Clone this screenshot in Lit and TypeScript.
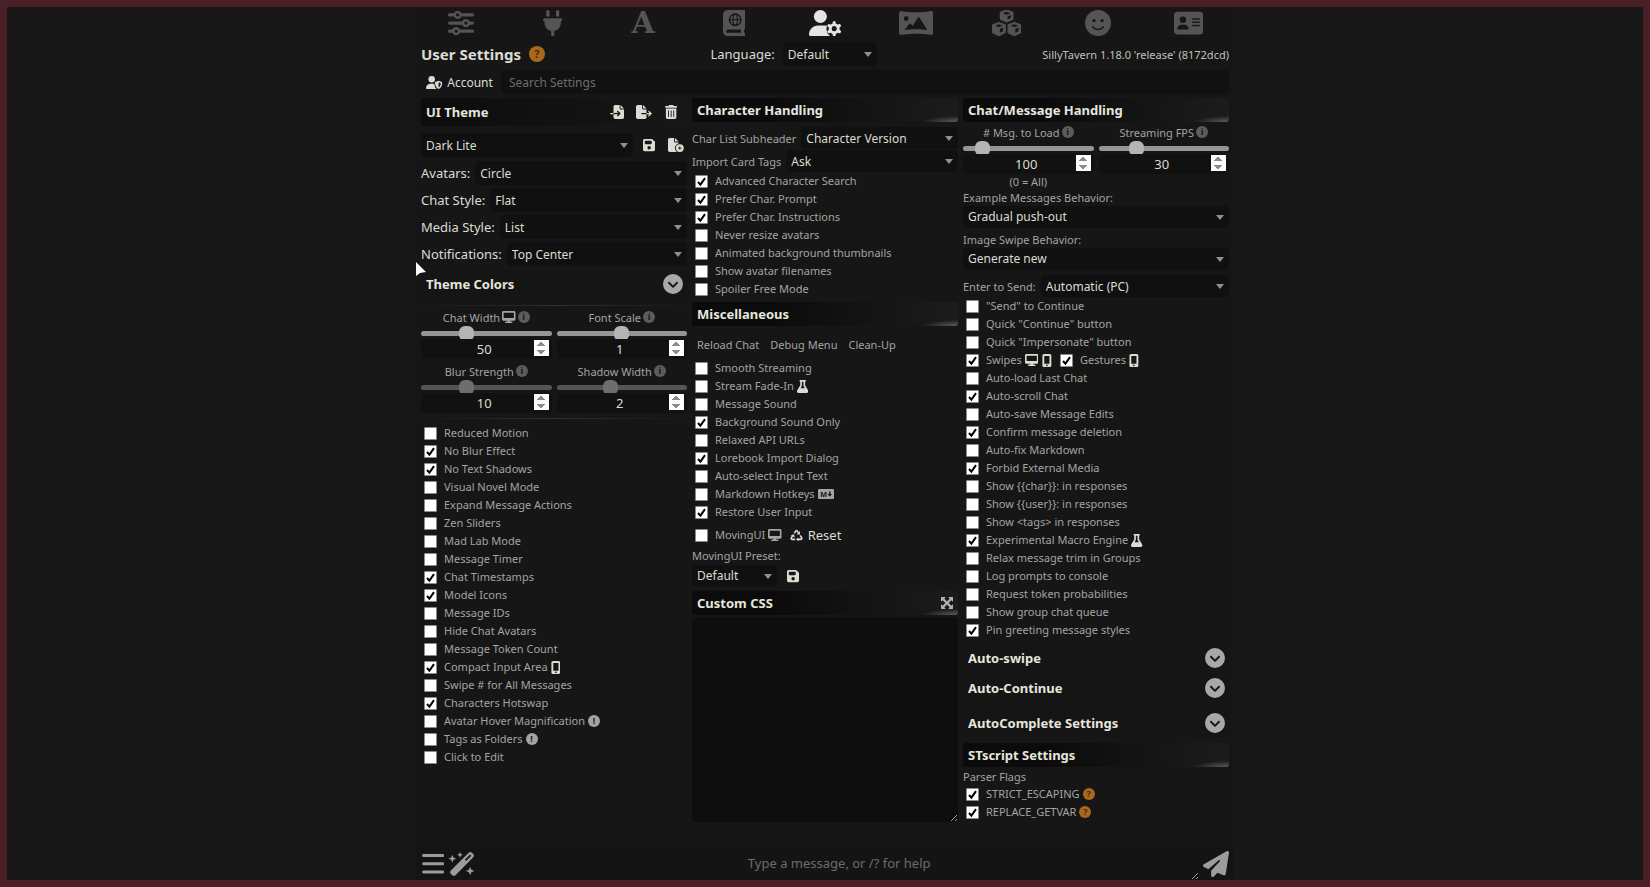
import { LitElement, html, svg, css, nothing, type TemplateResult } from "lit";
import { customElement, property } from "lit/decorators.js";
import { classMap } from "lit/directives/class-map.js";

type Glyph = { box: string; art: TemplateResult };
const path = (box: string, d: string): Glyph => ({ box, art: svg`<path fill-rule="evenodd" d=${d}></path>` });

const GLYPHS: Record<string, Glyph> = {
  sliders: path("0 0 512 512", "M0 416c0 17.7 14.3 32 32 32l54.7 0c12.3 28.3 40.5 48 73.3 48s61-19.7 73.3-48L480 448c17.7 0 32-14.3 32-32s-14.3-32-32-32l-246.7 0c-12.3-28.3-40.5-48-73.3-48s-61 19.7-73.3 48L32 384c-17.7 0-32 14.3-32 32zm128 0a32 32 0 1 1 64 0 32 32 0 1 1 -64 0zM320 256a32 32 0 1 1 64 0 32 32 0 1 1 -64 0zm32-80c-32.8 0-61 19.7-73.3 48L32 224c-17.7 0-32 14.3-32 32s14.3 32 32 32l246.7 0c12.3 28.3 40.5 48 73.3 48s61-19.7 73.3-48l54.7 0c17.7 0 32-14.3 32-32s-14.3-32-32-32l-54.7 0c-12.3-28.3-40.5-48-73.3-48zM192 128a32 32 0 1 1 0-64 32 32 0 1 1 0 64zm73.3-64C253 35.7 224.8 16 192 16s-61 19.7-73.3 48L32 64C14.3 64 0 78.3 0 96s14.3 32 32 32l86.7 0c12.3 28.3 40.5 48 73.3 48s61-19.7 73.3-48L480 128c17.7 0 32-14.3 32-32s-14.3-32-32-32L265.3 64z"),
  plug: path("0 0 384 512", "M96 0C78.3 0 64 14.3 64 32l0 96 64 0 0-96c0-17.7-14.3-32-32-32zM288 0c-17.7 0-32 14.3-32 32l0 96 64 0 0-96c0-17.7-14.3-32-32-32zM32 160c-17.7 0-32 14.3-32 32s14.3 32 32 32l0 32c0 77.4 55 142 128 156.8l0 67.2c0 17.7 14.3 32 32 32s32-14.3 32-32l0-67.2C297 398 352 333.4 352 256l0-32c17.7 0 32-14.3 32-32s-14.3-32-32-32L32 160z"),
  atlas: {
    box: "0 0 448 512",
    art: svg`<path fill-rule="evenodd" d="M96 0C43 0 0 43 0 96v320c0 53 43 96 96 96h320c18 0 32-14 32-32s-14-32-32-32v-64c18 0 32-14 32-32V32c0-18-14-32-32-32H96zm0 384h256v64H96c-18 0-32-14-32-32s14-32 32-32zM240 64a128 128 0 1 1 0 256 128 128 0 1 1 0-256z"></path>
      <circle cx="240" cy="192" r="100"></circle>
      <g fill="none" stroke="#171717" stroke-width="22"><ellipse cx="240" cy="192" rx="44" ry="104"></ellipse><path d="M136 192h208"></path></g>`,
  },
  userGear: {
    box: "0 0 640 512",
    art: svg`<circle cx="224" cy="128" r="128"></circle>
      <path d="M178 304C80 304 0 384 0 482c0 17 13 30 30 30h388c-55-35-78-95-62-160 5-18 10-30 18-42-30-6-70-6-104-6z"></path>
      <circle cx="496" cy="368" r="152" fill="#171717"></circle>
      <circle cx="496" cy="368" r="78" fill="none" stroke="currentColor" stroke-width="60"></circle>
      <g stroke="currentColor" stroke-width="62" stroke-linecap="round"><path d="M496 262v-12M496 474v12M404 315l-10-6M588 421l10 6M588 315l10-6M404 421l-10 6"></path></g>
      <circle cx="496" cy="368" r="48" fill="#171717"></circle>`,
  },
  panorama: path("0 0 640 448", "M46 0C20 0 0 20 0 46v356c0 26 20 46 46 46 5 0 10-1 15-3 14-4 117-20 259-20s245 16 259 20c5 2 10 3 15 3 26 0 46-20 46-46V46c0-26-20-46-46-46-5 0-10 1-15 3-14 4-117 20-259 20S75 7 61 3c-5-2-10-3-15-3zM134 96a46 46 0 1 1 0 92 46 46 0 1 1 0-92zM368 118c9 0 16 4 20 11l142 228c-60-8-134-14-210-14-80 0-156 5-217 14l86-108c5-6 12-9 19-9s14 3 19 9l27 33 94-153c4-7 11-11 20-11z"),
  cubes: {
    box: "0 0 576 512",
    art: svg`<path d="M288 0l122 46v132l-122 56-122-56V46zM136 246l122 48v150l-122 60L14 444V294zM440 246l122 48v150l-122 60-122-60V294z" stroke="currentColor" stroke-width="26" stroke-linejoin="round"></path>
      <path d="M288 32l76 30-76 32-76-32zM136 282l72 28-72 30-72-30zM440 282l72 28-72 30-72-30zM306 126l66-28v58l-66 32zM154 374l66-28v70l-66 34zM458 374l66-28v70l-66 34z" fill="#171717"></path>`,
  },
  smile: path("0 0 512 512", "M256 512A256 256 0 1 0 256 0a256 256 0 1 0 0 512zM164.1 325.5C182 346.2 212.6 368 256 368s74-21.8 91.9-42.5c5.8-6.7 15.9-7.4 22.6-1.6s7.4 15.9 1.6 22.6C349.8 372.1 311.1 400 256 400s-93.8-27.9-116.1-53.5c-5.8-6.7-5.1-16.8 1.6-22.6s16.8-5.1 22.6 1.6zM144.4 208a32 32 0 1 1 64 0 32 32 0 1 1 -64 0zm192-32a32 32 0 1 1 0 64 32 32 0 1 1 0-64z"),
  card: path("0 0 576 512", "M64 32C28.7 32 0 60.7 0 96L0 416c0 35.3 28.7 64 64 64l448 0c35.3 0 64-28.7 64-64l0-320c0-35.3-28.7-64-64-64L64 32zm80 256l64 0c44.2 0 80 35.8 80 80c0 8.8-7.2 16-16 16L80 384c-8.8 0-16-7.2-16-16c0-44.2 35.8-80 80-80zm-32-96a64 64 0 1 1 128 0 64 64 0 1 1 -128 0zm256-32l128 0c8.8 0 16 7.2 16 16s-7.2 16-16 16l-128 0c-8.8 0-16-7.2-16-16s7.2-16 16-16zm0 64l128 0c8.8 0 16 7.2 16 16s-7.2 16-16 16l-128 0c-8.8 0-16-7.2-16-16s7.2-16 16-16zm0 64l128 0c8.8 0 16 7.2 16 16s-7.2 16-16 16l-128 0c-8.8 0-16-7.2-16-16s7.2-16 16-16z"),
  userShield: {
    box: "0 0 640 512",
    art: svg`<circle cx="224" cy="128" r="128"></circle>
      <path d="M178 304C80 304 0 384 0 482c0 17 13 30 30 30h388c-60-50-84-110-84-190-20-14-60-18-84-18z"></path>
      <path fill-rule="evenodd" d="M496 190l130 50c8 3 14 10 14 20 0 80-30 200-144 252-114-52-144-172-144-252 0-10 6-17 14-20zM496 250v200c60-35 84-100 86-168z"></path>`,
  },
  fileImport: path("0 0 512 512", "M128 64c0-35.3 28.7-64 64-64L352 0l0 128c0 17.7 14.3 32 32 32l128 0 0 288c0 35.3-28.7 64-64 64l-256 0c-35.3 0-64-28.7-64-64l0-112 174.1 0-39 39c-9.4 9.4-9.4 24.6 0 33.9s24.6 9.4 33.9 0l80-80c9.4-9.4 9.4-24.6 0-33.9l-80-80c-9.4-9.4-24.6-9.4-33.9 0s-9.4 24.6 0 33.9l39 39L128 288l0-224zm0 224l0 48L24 336c-13.3 0-24-10.7-24-24s10.7-24 24-24l104 0zM512 128l-128 0L384 0 512 128z"),
  fileExport: path("0 0 576 512", "M0 64C0 28.7 28.7 0 64 0L224 0l0 128c0 17.7 14.3 32 32 32l128 0 0 128-168 0c-13.3 0-24 10.7-24 24s10.7 24 24 24l168 0 0 112c0 35.3-28.7 64-64 64L64 512c-35.3 0-64-28.7-64-64L0 64zM384 336l0-48 110.1 0-39-39c-9.4-9.4-9.4-24.6 0-33.9s24.6-9.4 33.9 0l80 80c9.4 9.4 9.4 24.6 0 33.9l-80 80c-9.4 9.4-24.6 9.4-33.9 0s-9.4-24.6 0-33.9l39-39L384 336zm0-208l-128 0L256 0 384 128z"),
  trash: path("0 0 448 512", "M135.2 17.7C140.6 6.8 151.7 0 163.8 0L284.2 0c12.1 0 23.2 6.8 28.6 17.7L320 32l96 0c17.7 0 32 14.3 32 32s-14.3 32-32 32L32 96C14.3 96 0 81.7 0 64S14.3 32 32 32l96 0 7.2-14.3zM32 128l384 0 0 320c0 35.3-28.7 64-64 64L96 512c-35.3 0-64-28.7-64-64l0-320zm96 64c-8.8 0-16 7.2-16 16l0 224c0 8.8 7.2 16 16 16s16-7.2 16-16l0-224c0-8.8-7.2-16-16-16zm96 0c-8.8 0-16 7.2-16 16l0 224c0 8.8 7.2 16 16 16s16-7.2 16-16l0-224c0-8.8-7.2-16-16-16zm96 0c-8.8 0-16 7.2-16 16l0 224c0 8.8 7.2 16 16 16s16-7.2 16-16l0-224c0-8.8-7.2-16-16-16z"),
  floppy: path("0 0 448 512", "M64 32C28.7 32 0 60.7 0 96L0 416c0 35.3 28.7 64 64 64l320 0c35.3 0 64-28.7 64-64l0-242.7c0-17-6.7-33.3-18.7-45.3L352 50.7C340 38.7 323.7 32 306.7 32L64 32zm0 96c0-17.7 14.3-32 32-32l192 0c17.7 0 32 14.3 32 32l0 64c0 17.7-14.3 32-32 32L96 224c-17.7 0-32-14.3-32-32l0-64zM224 288a64 64 0 1 1 0 128 64 64 0 1 1 0-128z"),
  filePlus: {
    box: "0 0 576 512",
    art: svg`<path d="M64 0h160v128c0 18 14 32 32 32h128v38c-80 30-128 90-128 170 0 60 25 110 70 144H64c-35 0-64-29-64-64V64C0 29 29 0 64 0zM256 0l128 128H256z"></path>
      <path fill-rule="evenodd" d="M432 224a144 144 0 1 1 0 288 144 144 0 1 1 0-288zM416 304v48h-48v32h48v48h32v-48h48v-32h-48v-48z"></path>`,
  },
  desktop: path("0 0 576 512", "M64 0C28.7 0 0 28.7 0 64L0 352c0 35.3 28.7 64 64 64l176 0-10.7 32L160 448c-17.7 0-32 14.3-32 32s14.3 32 32 32l256 0c17.7 0 32-14.3 32-32s-14.3-32-32-32l-69.3 0L336 416l176 0c35.3 0 64-28.7 64-64l0-288c0-35.3-28.7-64-64-64L64 0zM506 70l0 230L70 300 70 70l436 0z"),
  mobile: path("0 0 384 512", "M16 64C16 28.7 44.7 0 80 0L304 0c35.3 0 64 28.7 64 64l0 384c0 35.3-28.7 64-64 64L80 512c-35.3 0-64-28.7-64-64L16 64zM224 448a32 32 0 1 0 -64 0 32 32 0 1 0 64 0zM294 74L90 74l0 310 204 0 0-310z"),
  flask: path("0 0 448 512", "M288 0L160 0 128 0C110.3 0 96 14.3 96 32s14.3 32 32 32l0 132.8c0 11.8-3.3 23.5-9.5 33.5L10.3 406.2C3.6 417.2 0 429.7 0 442.6C0 480.9 31.1 512 69.4 512l309.2 0c38.3 0 69.4-31.1 69.4-69.4c0-12.8-3.6-25.4-10.3-36.4L329.5 230.4c-6.2-10.1-9.5-21.7-9.5-33.5L320 64c17.7 0 32-14.3 32-32s-14.3-32-32-32L288 0zM192 196.8L192 64l64 0 0 132.8c0 23.7 6.6 46.9 19 67.1L309.5 320l-171 0L173 263.9c12.4-20.2 19-43.4 19-67.1z"),
  markdown: {
    box: "0 0 640 400",
    art: svg`<rect width="640" height="400" rx="48"></rect><text x="90" y="306" font-family="Noto Sans" font-weight="700" font-size="290" fill="#171717">M</text><path d="M440 96h60v100h60L470 310 380 196h60z" fill="#171717"></path>`,
  },
  recycle: {
    box: "0 0 512 512",
    art: svg`<g fill="none" stroke="currentColor" stroke-width="62" stroke-linejoin="round"><path d="M172 170l58-98c12-20 40-20 52 0l48 82"></path><path d="M402 252l62 106c12 22-4 50-30 50H300"></path><path d="M204 408H78c-26 0-42-28-30-50l54-92"></path></g>
      <path d="M392 78v136H256zM332 330v156l-92-78zM30 246l128-42 32 126z"></path>`,
  },
  expand: {
    box: "0 0 512 512",
    art: svg`<path d="M20 0h150c16 0 24 18 12 30l-42 42 116 116L372 72l-42-42c-12-12-4-30 12-30h150c12 0 20 8 20 20v150c0 16-18 24-30 12l-42-42-116 116 116 116 42-42c12-12 30-4 30 12v150c0 12-8 20-20 20H342c-16 0-24-18-12-30l42-42-116-116-116 116 42 42c12 12 4 30-12 30H20c-12 0-20-8-20-20V342c0-16 18-24 30-12l42 42 116-116L72 140l-42 42c-12 12-30 4-30-12V20C0 8 8 0 20 0z"></path>`,
  },
  chevron: path("0 0 512 512", "M256 0a256 256 0 1 0 0 512A256 256 0 1 0 256 0zM135 241c-9.4-9.4-9.4-24.6 0-33.9s24.6-9.4 33.9 0l87 87 87-87c9.4-9.4 24.6-9.4 33.9 0s9.4 24.6 0 33.9L273 345c-9.4 9.4-24.6 9.4-33.9 0L135 241z"),
  bars: path("0 0 448 400", "M32 0h384a30 30 0 0 1 0 60H32a30 30 0 0 1 0-60zM32 165h384a30 30 0 0 1 0 60H32a30 30 0 0 1 0-60zM32 330h384a30 30 0 0 1 0 60H32a30 30 0 0 1 0-60z"),
  wand: {
    box: "0 0 576 512",
    art: svg`<path fill-rule="evenodd" d="M440 16c20-20 50-20 70 0l28 28c20 20 20 50 0 70L160 494c-20 20-52 20-72 0l-28-28c-20-20-20-52 0-72zM472 54l-112 112 26 28L498 80z"></path>
      <path d="M92 56l24 62 62 24-62 24-24 62-24-62-62-24 62-24zM256 0l18 42 42 18-42 18-18 42-18-42-42-18 42-18zM472 312l26 66 66 26-66 26-26 66-26-66-66-26 66-26z"></path>`,
  },
  plane: path("0 0 512 512", "M498.1 5.6c10.1 7 15.4 19.1 13.5 31.2l-64 416c-1.5 9.7-7.4 18.2-16 23s-18.9 5.4-28 1.6L284 427.7l-68.5 74.1c-8.9 9.7-22.9 12.9-35.2 8.1S160 493.2 160 480l0-83.6c0-4 1.5-7.8 4.2-10.8L331.8 202.8c5.8-6.3 5.6-16-.4-22s-15.7-6.4-22-.7L106 360.8 17.7 316.6C7.1 311.3 .3 300.7 0 288.9s5.9-22.8 16.1-28.7l448-256c10.7-6.1 23.9-5.5 34 1.4z"),
};

const icon = (name: string, size = "s13") =>
  html`<svg class="icon ${size}" viewBox=${GLYPHS[name].box} fill="currentColor" aria-hidden="true">${GLYPHS[name].art}</svg>`;

const mark = (kind: "info" | "note" | "help") =>
  html`<span class="mark ${kind}" aria-hidden="true">${kind === "info" ? "i" : kind === "note" ? "!" : "?"}</span>`;

const shared = css`
  :host { display: block; color: #dcdcd2; font-family: "Noto Sans", sans-serif; }
  *, *::before, *::after { box-sizing: border-box; }
  button, input, select, textarea { font: inherit; color: inherit; margin: 0; }
  button { display: inline-flex; align-items: center; justify-content: center; gap: 5px; padding: 0; border: 0; background: none; }
  .icon { display: block; flex: none; width: auto; }
  .s10 { height: 10px; }
  .s12 { height: 12px; }
  .s13 { height: 13px; }
  .s14 { height: 14px; }
  .s20 { height: 20px; }
  .s24 { height: 24px; }
  .s26 { height: 26px; }
  .mark { display: inline-flex; flex: none; align-items: center; justify-content: center; width: 12px; height: 12px; border-radius: 50%; font-size: 9px; line-height: 12px; font-weight: 700; color: #171717; }
  .info { background: #5c5c5c; }
  .note { background: #a3a3a3; }
  .help { background: #a8691c; color: #4a2c0a; }
  .select { flex: 1; min-width: 0; width: 100%; height: 24px; padding: 0 20px 0 5px; border: 0; border-radius: 4px; appearance: none; font-size: 12px; background: #101010 url("data:image/svg+xml,%3Csvg xmlns='http://www.w3.org/2000/svg' width='8' height='5'%3E%3Cpath d='M0 0h8L4 5z' fill='%23909090'/%3E%3C/svg%3E") no-repeat right 5px center; }
`;

/** A tick box with its caption; extra icons are slotted after the text. */
@customElement("tick-row")
class TickRow extends LitElement {
  @property() label = "";
  @property({ type: Boolean }) on = false;
  static styles = [shared, css`
    .tick { display: flex; align-items: center; gap: 7px; height: 18px; padding-left: 3px; font-size: 11px; line-height: 18px; color: #a4a4a0; white-space: nowrap; }
    .box { appearance: none; flex: none; width: 13px; height: 13px; border: 1px solid #8a8a8a; border-radius: 1px; background: #fff center no-repeat; }
    .box:checked { background-image: url("data:image/svg+xml,%3Csvg xmlns='http://www.w3.org/2000/svg' width='11' height='11'%3E%3Cpath d='M2 6l2.400 2.600L9 2.200' fill='none' stroke='%23000' stroke-width='2'/%3E%3C/svg%3E"); }
    .text { display: flex; align-items: center; gap: 3px; }
  `];
  render() {
    return html`<label class="tick"><input class="box" type="checkbox" .checked=${this.on}><span class="text">${this.label}<slot></slot></span></label>`;
  }
}

/** A slider with a caption above it and a number box below it. */
@customElement("range-field")
class RangeField extends LitElement {
  @property() label = "";
  @property({ type: Number }) min = 0;
  @property({ type: Number }) max = 100;
  @property({ type: Number }) step = 1;
  @property({ type: Number }) value = 0;
  @property({ type: Boolean }) screen = false;
  @property({ type: Boolean }) dim = false;
  @property() hint = "";
  static styles = [shared, css`
    .field { display: flex; flex-direction: column; align-items: stretch; }
    .caption { display: flex; align-items: center; justify-content: center; gap: 2px; height: 18px; padding-bottom: 2px; font-size: 11px; color: #a4a4a0; }
    .slider { appearance: none; display: block; width: 100%; height: 12px; background: none; }
    .slider::-webkit-slider-runnable-track { height: 5px; border-radius: 3px; background: #969696; }
    .slider::-webkit-slider-thumb { appearance: none; width: 15px; height: 15px; margin-top: -5px; border-radius: 6px; background: #b4b4b4; }
    .dim .slider::-webkit-slider-runnable-track { background: #555; }
    .dim .slider::-webkit-slider-thumb { background: #6e6e6e; }
    .number { width: 100%; height: 20px; padding: 0 3px 0 14px; border: 0; border-radius: 4px; background: #111; font-size: 13px; text-align: center; }
    .number::-webkit-inner-spin-button { opacity: 1; height: 16px; }
    .hint { font-size: 11px; line-height: 16px; text-align: center; color: #a4a4a0; }
  `];
  render() {
    const range = { min: this.min, max: this.max, step: this.step };
    return html`<div class=${classMap({ field: true, dim: this.dim })}>
      <label class="caption" for="slide">${this.label}${this.screen ? icon("desktop", "s12") : nothing}${mark("info")}</label>
      <input class="slider" id="slide" type="range" min=${range.min} max=${range.max} step=${range.step} .value=${String(this.value)}>
      <input class="number" type="number" aria-label=${this.label} .value=${String(this.value)}>
      ${this.hint ? html`<span class="hint">${this.hint}</span>` : nothing}
    </div>`;
  }
}

type Tick = [label: string, on?: 0 | 1, extra?: TemplateResult];

const THEME_TICKS: Tick[] = [
  ["Reduced Motion"], ["No Blur Effect", 1], ["No Text Shadows", 1], ["Visual Novel Mode"],
  ["Expand Message Actions"], ["Zen Sliders"], ["Mad Lab Mode"], ["Message Timer"],
  ["Chat Timestamps", 1], ["Model Icons", 1], ["Message IDs"], ["Hide Chat Avatars"],
  ["Message Token Count"], ["Compact Input Area", 1, html`<span class="lit">${icon("mobile")}</span>`],
  ["Swipe # for All Messages"], ["Characters Hotswap", 1],
  ["Avatar Hover Magnification", 0, mark("note")], ["Tags as Folders", 0, mark("note")], ["Click to Edit"],
];
const CHARACTER_TICKS: Tick[] = [
  ["Advanced Character Search", 1], ["Prefer Char. Prompt", 1], ["Prefer Char. Instructions", 1],
  ["Never resize avatars"], ["Animated background thumbnails"], ["Show avatar filenames"], ["Spoiler Free Mode"],
];
const MISC_TICKS: Tick[] = [
  ["Smooth Streaming"], ["Stream Fade-In", 0, html`<span class="lit">${icon("flask")}</span>`], ["Message Sound"],
  ["Background Sound Only", 1], ["Relaxed API URLs"], ["Lorebook Import Dialog", 1],
  ["Auto-select Input Text"], ["Markdown Hotkeys", 0, icon("markdown", "s10")], ["Restore User Input", 1],
];
const SEND_TICKS: Tick[] = [[`"Send" to Continue`], [`Quick "Continue" button`], [`Quick "Impersonate" button`]];
const CHAT_TICKS: Tick[] = [
  ["Auto-load Last Chat"], ["Auto-scroll Chat", 1], ["Auto-save Message Edits"], ["Confirm message deletion", 1],
  ["Auto-fix Markdown"], ["Forbid External Media", 1], ["Show {{char}}: in responses"],
  ["Show {{user}}: in responses"], ["Show <tags> in responses"],
  ["Experimental Macro Engine", 1, html`<span class="lit">${icon("flask")}</span>`],
  ["Relax message trim in Groups"], ["Log prompts to console"], ["Request token probabilities"],
  ["Show group chat queue"], ["Pin greeting message styles", 1],
];
const FLAG_TICKS: Tick[] = [["STRICT_ESCAPING", 1, mark("help")], ["REPLACE_GETVAR", 1, mark("help")]];

@customElement("app-root")
class AppRoot extends LitElement {
  static styles = [shared, css`
    .frame { display: flex; flex-direction: column; align-items: center; min-height: 100vh; border: 7px solid #4a2026; background: #171717; }
    .sheet { display: flex; flex: 1; flex-direction: column; width: 50%; min-width: 800px; background: #161616; }
    .nav { display: grid; grid-template-columns: repeat(9, 1fr); height: 31px; }
    .tab { color: #545454; }
    .tab.active { color: #e4e4e4; }
    .letter { font: 700 30px/26px "DejaVu Serif", serif; }
    .panel { display: flex; flex: 1; flex-direction: column; gap: 4px; padding: 3px 5px 4px; border: solid #121212; border-width: 1px 0; }
    .top, .search { display: flex; align-items: center; height: 24px; }
    .top { justify-content: space-between; }
    .title { display: flex; align-items: center; gap: 8px; margin: 0; font-size: 15px; font-weight: 700; }
    .title .mark { width: 16px; height: 16px; font-size: 11px; }
    .language { display: flex; align-items: center; gap: 8px; font-size: 13px; }
    .language .select { flex: none; width: 94px; }
    .version { font-size: 11px; color: #c0c0bc; }
    .search { gap: 8px; padding-left: 5px; font-size: 12px; }
    .account { height: 24px; }
    .query { flex: 1; min-width: 0; height: 24px; padding: 0 8px; border: 0; border-radius: 4px; background: #111; }
    .query::placeholder, .message::placeholder { color: #6c6c6c; opacity: 1; }
    .columns { display: grid; flex: 1; grid-template-columns: repeat(3, minmax(0, 1fr)); gap: 5px; }
    .column { display: flex; flex-direction: column; }
    .bar { display: flex; align-items: center; justify-content: space-between; height: 24px; padding: 0 5px; border-radius: 3px; background: radial-gradient(ellipse 36px 6px at 100% 100%, #5c5c5c, transparent), linear-gradient(90deg, #0b0b0b 30%, #1c1c1c); }
    .bar.tall { height: 28px; background: linear-gradient(90deg, #0c0c0c, #171717); }
    .bar.plain { height: 28px; background: #151515; color: #a8a8a8; padding-right: 4px; }
    .heading { margin: 0; font-size: 13px; line-height: 20px; font-weight: 700; color: #e6e6de; }
    .tools { display: flex; gap: 5px; }
    .tool { width: 22px; height: 22px; }
    .rows { display: flex; flex-direction: column; gap: 3px; margin: 7px 0 4px; font-size: 13px; }
    .row { display: flex; align-items: center; gap: 5px; }
    .row label { white-space: nowrap; }
    .preset { margin-bottom: 1px; }
    .small { margin-top: 1px; font-size: 11px; color: #a4a4a0; }
    .small .select, .stack .select { height: 22px; color: #dcdcd2; }
    .first { margin-top: 5px; }
    .ranges { display: grid; grid-template-columns: 1fr 1fr; gap: 4px 5px; }
    .framed { margin: 7px 0 5px; padding: 3px 0 5px; border: solid; border-width: 1px 0; border-image: linear-gradient(90deg, #171717, #303030, #171717) 1; }
    .misc { margin-top: 4px; }
    .actions { display: flex; gap: 11px; height: 20px; margin: 8px 0 5px; padding-left: 5px; font-size: 11px; color: #a4a4a0; }
    .moving { display: flex; align-items: center; gap: 8px; height: 22px; margin-top: 3px; font-size: 13px; }
    .stack { display: flex; flex-direction: column; font-size: 11px; line-height: 16px; color: #a4a4a0; }
    .stack .select { flex: none; }
    .stack + .stack { margin-top: 4px; }
    .moving-preset { gap: 1px; margin: 2px 0 4px; }
    .moving-preset .row { color: #dcdcd2; }
    .moving-preset .select { width: 85px; }
    .css { flex: 1; width: 100%; min-height: 80px; margin-top: 2px; border: 0; border-radius: 4px; background: #0e0e0e; resize: vertical; }
    .muted { color: #b4b4ac; }
    .lit { color: #dcdcd2; }
    .swipes { display: flex; gap: 5px; }
    .icons { display: flex; gap: 4px; color: #dcdcd2; }
    .drawers { display: flex; flex-direction: column; gap: 2px; margin: 5px 0 6px; }
    .complete { margin-top: 5px; }
    .flags { margin-top: 2px; }
    .composer { display: flex; align-items: center; gap: 4px; height: 33px; margin-top: 20px; padding: 0 5px 0 6px; background: #141414; color: #9c9c9c; }
    .message { flex: 1; min-width: 0; height: 33px; padding: 7px 0; border: 0; background: none; font-size: 13px; line-height: 19px; text-align: center; resize: vertical; }
    .pointer { position: absolute; left: 416px; top: 262px; width: 10px; height: 15px; }
  `];

  private ticks(list: Tick[]) {
    return list.map(([label, on, extra]) => html`<tick-row .label=${label} .on=${!!on}>${extra ?? nothing}</tick-row>`);
  }
  private select(id: string, value: string) {
    return html`<select class="select" id=${id}><option>${value}</option></select>`;
  }
  private choice(id: string, label: string, value: string, kind = "") {
    return html`<div class="row ${kind}"><label for=${id}>${label}</label>${this.select(id, value)}</div>`;
  }
  private tool(name: string, label: string, size = "s14") {
    return html`<button class="tool" aria-label=${label}>${icon(name, size)}</button>`;
  }
  private drawer(label: string, kind = "") {
    return html`<div class="bar plain ${kind}"><h4 class="heading">${label}</h4><button aria-label="Toggle ${label}">${icon("chevron", "s20")}</button></div>`;
  }

  render() {
    const tabs: [string, string, string][] = [
      ["sliders", "s26", "Response Configuration"], ["plug", "s26", "API Connections"], ["", "", "Formatting"],
      ["atlas", "s26", "World Info"], ["userGear", "s26", "User Settings"], ["panorama", "s24", "Backgrounds"],
      ["cubes", "s26", "Extensions"], ["smile", "s26", "Personas"], ["card", "s26", "Characters"],
    ];
    return html`<div class="frame"><main class="sheet">
      <nav class="nav">${tabs.map(([name, size, label]) => html`
        <button class=${classMap({ tab: true, active: name === "userGear" })} aria-label=${label}>${name ? icon(name, size) : html`<span class="letter">A</span>`}</button>`)}
      </nav>
      <section class="panel">
        <div class="top">
          <h3 class="title">User Settings ${mark("help")}</h3>
          <div class="language"><label for="language">Language:</label>${this.select("language", "Default")}</div>
          <span class="version">SillyTavern 1.18.0 'release' (8172dcd)</span>
        </div>
        <div class="search">
          <button class="account">${icon("userShield")}Account</button>
          <input class="query" type="search" placeholder="Search Settings" aria-label="Search Settings">
        </div>
        <div class="columns">
          <div class="column">
            <div class="bar tall"><h4 class="heading">UI Theme</h4>
              <div class="tools">${this.tool("fileImport", "Import theme")}${this.tool("fileExport", "Export theme")}${this.tool("trash", "Delete theme")}</div>
            </div>
            <div class="rows">
              <div class="row preset"><select class="select" aria-label="UI Theme"><option>Dark Lite</option></select>${this.tool("floppy", "Save theme")}${this.tool("filePlus", "Save as new theme")}</div>
              ${this.choice("avatars", "Avatars:", "Circle")}
              ${this.choice("chat-style", "Chat Style:", "Flat")}
              ${this.choice("media-style", "Media Style:", "List")}
              ${this.choice("notifications", "Notifications:", "Top Center")}
            </div>
            ${this.drawer("Theme Colors")}
            <div class="ranges framed">
              <range-field label="Chat Width" min="25" max="100" value="50" screen></range-field>
              <range-field label="Font Scale" min="0.5" max="1.5" step="0.01" value="1"></range-field>
              <range-field label="Blur Strength" min="0" max="30" value="10" dim></range-field>
              <range-field label="Shadow Width" min="0" max="5" value="2" dim></range-field>
            </div>
            ${this.ticks(THEME_TICKS)}
          </div>
          <div class="column">
            <div class="bar"><h4 class="heading">Character Handling</h4></div>
            ${this.choice("subheader", "Char List Subheader", "Character Version", "small first")}
            ${this.choice("card-tags", "Import Card Tags", "Ask", "small")}
            ${this.ticks(CHARACTER_TICKS)}
            <div class="bar misc"><h4 class="heading">Miscellaneous</h4></div>
            <div class="actions"><button>Reload Chat</button><button>Debug Menu</button><button>Clean-Up</button></div>
            ${this.ticks(MISC_TICKS)}
            <div class="moving"><tick-row label="MovingUI">${icon("desktop", "s12")}</tick-row><button>${icon("recycle")}Reset</button></div>
            <div class="stack moving-preset"><label for="moving-preset">MovingUI Preset:</label>
              <div class="row">${this.select("moving-preset", "Default")}${this.tool("floppy", "Save preset")}</div>
            </div>
            <div class="bar"><h4 class="heading">Custom CSS</h4><button class="muted" aria-label="Expand editor">${icon("expand", "s12")}</button></div>
            <textarea class="css" aria-label="Custom CSS"></textarea>
          </div>
          <div class="column">
            <div class="bar"><h4 class="heading">Chat/Message Handling</h4></div>
            <div class="ranges flags">
              <range-field label="# Msg. to Load" min="0" max="1000" value="100" hint="(0 = All)"></range-field>
              <range-field label="Streaming FPS" min="5" max="100" value="30"></range-field>
            </div>
            <div class="stack"><label for="examples">Example Messages Behavior:</label>${this.select("examples", "Gradual push-out")}</div>
            <div class="stack"><label for="image-swipe">Image Swipe Behavior:</label>${this.select("image-swipe", "Generate new")}</div>
            ${this.choice("enter", "Enter to Send:", "Automatic (PC)", "small first")}
            ${this.ticks(SEND_TICKS)}
            <div class="swipes">
              <tick-row label="Swipes" on><span class="icons">${icon("desktop", "s12")}${icon("mobile")}</span></tick-row>
              <tick-row label="Gestures" on><span class="lit">${icon("mobile")}</span></tick-row>
            </div>
            ${this.ticks(CHAT_TICKS)}
            <div class="drawers">${this.drawer("Auto-swipe")}${this.drawer("Auto-Continue")}${this.drawer("AutoComplete Settings", "complete")}</div>
            <div class="bar"><h4 class="heading">STscript Settings</h4></div>
            <div class="stack flags"><span>Parser Flags</span></div>
            ${this.ticks(FLAG_TICKS)}
          </div>
        </div>
      </section>
      <footer class="composer">
        <button aria-label="Options">${icon("bars", "s20")}</button>
        <button aria-label="Extensions menu">${icon("wand", "s24")}</button>
        <textarea class="message" rows="1" placeholder="Type a message, or /? for help" aria-label="Message"></textarea>
        <button aria-label="Send">${icon("plane", "s26")}</button>
      </footer>
    </main>
    <svg class="pointer" viewBox="0 0 10 15" aria-hidden="true"><path d="M0 0l10 10-6 1-4 3z" fill="#fff"></path></svg>
    </div>`;
  }
}
